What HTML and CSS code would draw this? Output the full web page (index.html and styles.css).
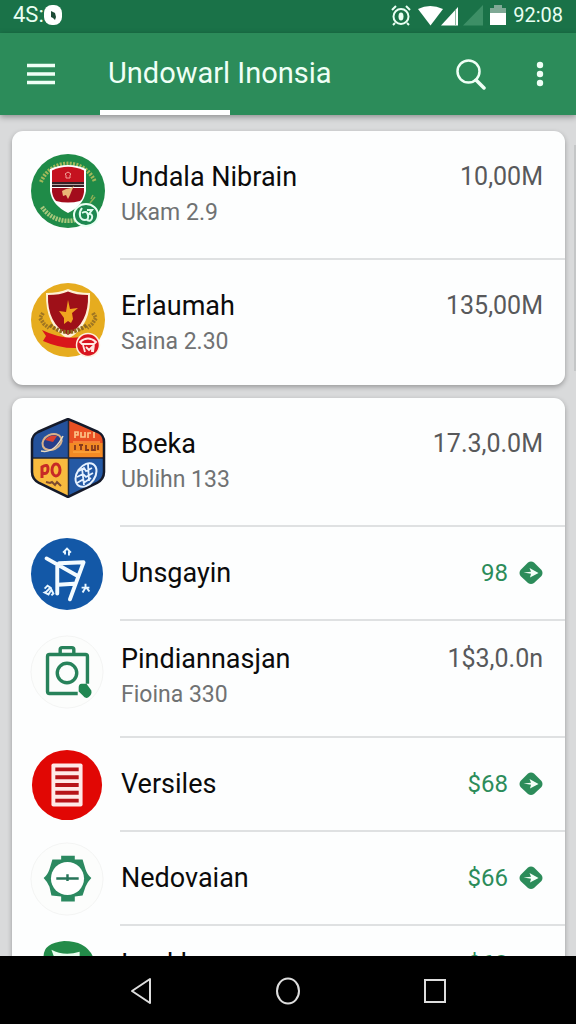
FILE: index.html
```html
<!DOCTYPE html>
<html lang="id">
<head>
<meta charset="utf-8">
<meta name="viewport" content="width=device-width, initial-scale=1">
<title>Undowarl Inonsia</title>
<link rel="stylesheet" href="styles.css">
</head>
<body>
<svg width="0" height="0" class="defs" aria-hidden="true">
  <symbol id="go" viewBox="0 0 24 24">
    <path d="M9 1.500Q12-.7 15 1.500L22.500 9Q24.500 12 22.500 15L15 22Q12 24 9 22L1.500 15Q-.5 12 1.500 9Z" fill="#2c8c5a"/>
    <path d="M4.500 11.600L12 10.800L10.500 7L19.500 12L11 16.500L12 12.800Z" fill="#f4fff8"/>
  </symbol>
</svg>
<div class="screen">
  <div class="status">
    <div class="status-left"><span>4S:</span>
      <svg width="18" height="20" viewBox="0 0 18 20"><rect width="18" height="20" rx="8" fill="#fff"/><path d="M7 6l4 2 1 4-1 3-2-2-2-1z" fill="#1c4a35"/></svg>
    </div>
    <div class="status-right">
      <svg width="94" height="22" viewBox="0 0 94 22">
        <g fill="none" stroke="#e9fff3" stroke-width="2"><circle cx="12" cy="12.500" r="7.500"/><path d="M3 6l4-4M17 2l4 4M6 19l-2 2M18 19l2 2"/></g>
        <ellipse cx="12" cy="12.500" rx="2.500" ry="4" fill="#e9fff3"/>
        <path d="M29 5Q41-1 54 5L41.500 21.500Z" fill="#fff"/>
        <path d="M52 21.500L69 3V21.500Z" fill="#fff"/><path d="M66.500 6v16" stroke="#8fb9a3"/>
        <path d="M74 21.500L94 1V21.500Z" fill="#3d8f66"/>
      </svg>
      <svg width="16" height="20" viewBox="0 0 16 20"><path d="M0 3h4V0h8v3h4v6H0z" fill="#7fa995"/><path d="M0 8h16v12H0z" fill="#fff"/></svg>
      <time>92:08</time>
    </div>
  </div>

  <header class="appbar">
    <button class="icon-button menu" aria-label="Menu"><svg width="28" height="22" viewBox="0 0 28 22"><path d="M0 2.500h28M0 11h28M0 19.500h28" stroke="#effff6" stroke-width="3.500"/></svg></button>
    <h1 class="title">Undowarl Inonsia</h1>
    <button class="icon-button" aria-label="Search"><svg width="30" height="31" viewBox="0 0 30 31"><circle cx="12.500" cy="12.500" r="11" fill="none" stroke="#effff6" stroke-width="2.500"/><path d="M20 21l8 8" stroke="#effff6" stroke-width="3.500" stroke-linecap="round"/></svg></button>
    <button class="icon-button more" aria-label="More"><svg width="8" height="26" viewBox="0 0 8 26" fill="#effff6"><circle cx="4" cy="4" r="3.200"/><circle cx="4" cy="13" r="3.200"/><circle cx="4" cy="22" r="3.200"/></svg></button>
  </header>

  <main class="content">
    <ul class="card">
      <li class="row">
        <svg class="logo" viewBox="0 0 76 76">
          <circle cx="38" cy="38" r="37" fill="#1f8b48"/>
          <path d="M11 29A29 29 0 0 1 65 29" fill="none" stroke="#a3b85a" stroke-width="4" stroke-dasharray="2 1.300"/>
          <path d="M12 54A31 31 0 0 0 45 67" fill="none" stroke="#a9c77c" stroke-width="4.500" stroke-dasharray="2 1"/>
          <path d="M60 50l5-6M61 46l2-4" stroke="#8caf56" stroke-width="1.500"/>
          <path d="M20 16Q38 8 56 16V38Q54 52 38 60Q22 52 20 38Z" fill="#fff"/>
          <path d="M22 17.500Q38 10 54 17.500V29H22Z" fill="#c5121f"/>
          <path d="M22 29H54V34H22Z" fill="#352126"/><path d="M22 31.500h32" stroke="#b7a1a0"/>
          <path d="M22 35H54V39Q53 46 50 48Q38 51 26 48Q23 45 22 39Z" fill="#a30c1c"/>
          <path d="M35 21l3-2 3 2-1 1v3h-4v-3z" fill="none" stroke="#f2a197"/>
          <path d="M32 38l4-2 5-1 3-2-2 4-2 5-2 4-2-4-3 1z" fill="#e9b676"/>
          <ellipse cx="56" cy="62" rx="12" ry="11" fill="#1c8850" stroke="#e9fff2" stroke-width="2"/>
          <path d="M52 55q-3 4-2 8t5 4 3-5-6-2M57 57h5l-3 4q4 0 3 4t-5 2" fill="none" stroke="#dffced" stroke-width="2"/>
        </svg>
        <div class="body"><div class="text"><span class="name">Undala Nibrain</span><span class="sub">Ukam 2.9</span></div><span class="amount">10,00M</span></div>
      </li>
      <li class="row">
        <svg class="logo" viewBox="0 0 76 76">
          <circle cx="38" cy="38" r="37" fill="#e6ac1f"/>
          <path d="M13 31l-3 5 4 6 5 4M63 31l3 5-4 6-5 4" fill="none" stroke="#a07622" stroke-width="4" stroke-dasharray="2 1"/>
          <path d="M16 11Q29 11 38 7Q47 11 60 11Q62 44 38 57Q15 44 16 11Z" fill="#fff1d5"/>
          <path d="M18 13Q30 13 38 9.500Q46 13 58 13Q59 41 38 53Q17 41 18 13Z" fill="#9e1018"/>
          <path d="M38 18l2 9 8-1-6 5 1 6-2 4-3-2-4 3 0-6-5-7 7 1z" fill="#f0a51f"/>
          <path d="M20 43Q37 57 57 43" fill="none" stroke="#8d6920" stroke-width="4" stroke-dasharray="2.500 1.200"/>
          <path d="M12 48Q32 58 51 55L48 66Q31 67 13 59L16 54Z" fill="#d9161b"/>
          <circle cx="58" cy="63" r="11.500" fill="#d9151f" stroke="#fff0df" stroke-width="1.500"/>
          <path d="M50 60q8-7 16 0l-2 2H52zM53 63l2 7M63 70l1-7M56 65l3 3 3-3v5" fill="none" stroke="#ffe9e3" stroke-width="1.800"/>
        </svg>
        <div class="body"><div class="text"><span class="name">Erlaumah</span><span class="sub">Saina 2.30</span></div><span class="amount">135,00M</span></div>
      </li>
    </ul>

    <ul class="card">
      <li class="row">
        <svg class="logo crest" viewBox="0 0 76 80">
          <clipPath id="crest"><path d="M38 1Q55 8 68 14Q74 17 74 24V54Q74 61 67 65L38 79L9 65Q2 61 2 54V24Q2 17 8 14Q21 8 38 1Z"/></clipPath>
          <g clip-path="url(#crest)">
            <path d="M0 0h39v40H0z" fill="#24519b"/><path d="M39 0h37v40H39z" fill="#e95023"/>
            <path d="M0 40h39v40H0z" fill="#f9bb3e"/><path d="M39 40h37v40H39z" fill="#2459a4"/>
            <path d="M39 25h37v14H39z" fill="#f38a24"/><path d="M38.500 0v80M0 40h76" stroke="#222938" stroke-width="1.500"/>
          </g>
          <path d="M38 1Q55 8 68 14Q74 17 74 24V54Q74 61 67 65L38 79L9 65Q2 61 2 54V24Q2 17 8 14Q21 8 38 1Z" fill="none" stroke="#151a2a" stroke-width="2.500"/>
          <ellipse cx="22" cy="24" rx="10" ry="7.500" fill="#263e8b" stroke="#d7b28b" stroke-width="2" transform="rotate(-25 22 24)"/>
          <path d="M15 22q5-6 12-4l-4 6z" fill="#d94132"/><path d="M11 33q13 3 22-15" fill="none" stroke="#eadcc0" stroke-width="1.500"/>
          <path d="M45 20v-6h3v3h-3m6-3v5h4v-5m3 6v-5h3m3 5v-6" fill="none" stroke="#fcc487" stroke-width="1.700"/>
          <path d="M43 24h27M43 34h27" stroke="#ffb34b"/><path d="M45 27v5M49 27h4m-2 0v5M56 27v5h3M62 27v5h3v-5M68 27v5" stroke="#86391d" stroke-width="1.800" fill="none"/>
          <path d="M12 60V49Q18 45 18 51T12 55M22 52a4 6 0 1 0 8 0a4 6 0 1 0-8 0" fill="none" stroke="#c72a26" stroke-width="3"/>
          <path d="M16 64l4 1 2-1 3 3 2-3 4 4" fill="none" stroke="#7c4a2f" stroke-width="2"/>
          <g fill="none" stroke="#e7f2ff"><ellipse cx="56" cy="57" rx="9" ry="13" stroke-width="2" transform="rotate(35 56 57)"/><path d="M49 53l5-3 2 3 6-3M47 59l6-3 3 3 7-4M47 65l5-3 3 2 6-4M52 50l2 17M58 46l1 17" stroke-width="1.800"/></g>
        </svg>
        <div class="body"><div class="text"><span class="name">Boeka</span><span class="sub">Ublihn 133</span></div><span class="amount">17.3,0.0M</span></div>
      </li>
      <li class="row single">
        <svg class="logo" viewBox="0 0 76 76">
          <circle cx="38" cy="38" r="37" fill="#1358a7"/>
          <path d="M17 22L49 40M28 28V58M30 27L55 26L41 64M29 49L45 48" fill="none" stroke="#f3fbff" stroke-width="4" stroke-linecap="round" stroke-linejoin="round"/>
          <path d="M34 16l4-4 4 4M36 18v-3M40 19v-4M15 53l3-3 3 2-4 4-2 1 4 2 3-5 2 4-2 2M53 52h8M57 48v4l-3 5M58 52l3 4" fill="none" stroke="#e8f6ff" stroke-width="2"/>
        </svg>
        <div class="body"><div class="text"><span class="name">Unsgayin</span></div><span class="amount link">98</span><svg class="go" aria-hidden="true"><use href="#go"/></svg></div>
      </li>
      <li class="row compact">
        <svg class="logo" viewBox="0 0 76 76">
          <circle cx="38" cy="38" r="37" fill="#fcfdfc" stroke="#f3f4f3"/>
          <path d="M49 60H20Q18 60 18 58V22Q18 20 20 20H57Q59 20 59 22V50M31 19V15Q31 13 33 13H43Q45 13 45 15V19" fill="none" stroke="#27825a" stroke-width="3.500"/>
          <circle cx="38" cy="39" r="10" fill="none" stroke="#27825a" stroke-width="3.500"/>
          <path d="M50 54Q50 50 53 50L58 50L63 57Q64 61 60 64Q57 66 54 62L50 58Z" fill="#218752"/>
        </svg>
        <div class="body"><div class="text"><span class="name">Pindiannasjan</span><span class="sub">Fioina 330</span></div><span class="amount">1$3,0.0n</span></div>
      </li>
      <li class="row single">
        <svg class="logo" viewBox="0 0 76 76">
          <circle cx="38" cy="38" r="36" fill="#e10704"/>
          <rect x="22" y="16" width="32" height="44" rx="2" fill="#ffe9e7"/>
          <path d="M26 22H50M26 30H50M26 38H50M26 46H50M26 54H50" stroke="#b71318" stroke-width="4"/>
        </svg>
        <div class="body"><div class="text"><span class="name">Versiles</span></div><span class="amount link">$68</span><svg class="go" aria-hidden="true"><use href="#go"/></svg></div>
      </li>
      <li class="row single">
        <svg class="logo" viewBox="0 0 76 76">
          <circle cx="38" cy="38" r="37" fill="#fcfdfc" stroke="#f3f4f3"/>
          <path d="M32 14H46V18L54 18L57 28Q59 34 63 37Q59 41 57 46L54 55L46 56V61H32V56L22 55L20 46Q18 41 14 37Q18 34 20 28L23 18L32 18Z" fill="#2b8960"/>
          <circle cx="38.500" cy="37.500" r="17" fill="#fff"/>
          <path d="M27 37.500H50M38.500 33v7" stroke="#28755a" stroke-width="2.500"/>
        </svg>
        <div class="body"><div class="text"><span class="name">Nedovaian</span></div><span class="amount link">$66</span><svg class="go" aria-hidden="true"><use href="#go"/></svg></div>
      </li>
      <li class="row compact">
        <svg class="logo" viewBox="0 0 76 76">
          <path d="M14 18Q13 3 35 1Q58 1 65 18Q60 62 38 65Q18 60 14 18Z" fill="#238b49"/>
          <path d="M22 10Q35 17 51 12L51 32H30Z" fill="#eafff0"/>
        </svg>
        <div class="body"><div class="text"><span class="name">Inmkla</span></div><span class="amount link">$68</span></div>
      </li>
    </ul>
    <div class="scroll-thumb"></div>
  </main>

  <nav class="navbar">
    <button class="icon-button" aria-label="Back"><svg width="22" height="28" viewBox="0 0 22 28"><path d="M20 2V26L2 14Z" fill="none" stroke="#ddd" stroke-width="2" stroke-linejoin="round"/></svg></button>
    <button class="icon-button" aria-label="Home"><svg width="24" height="28" viewBox="0 0 24 28"><ellipse cx="12" cy="14" rx="11" ry="12.500" fill="none" stroke="#ddd" stroke-width="2"/></svg></button>
    <button class="icon-button" aria-label="Recent apps"><svg width="22" height="26" viewBox="0 0 22 26"><rect x="1" y="2" width="20" height="22" fill="none" stroke="#ddd" stroke-width="2"/></svg></button>
  </nav>
</div>
</body>
</html>
```
FILE: styles.css
```css
* {
  box-sizing: border-box;
}

body {
  margin: 0;
  font-family: Roboto, "Liberation Sans", sans-serif;
  color: #0b0b0b;
}

.defs {
  position: absolute;
}

.screen {
  display: flex;
  flex-direction: column;
  height: 100vh;
  overflow: hidden;
  background: #d9dadb;
}

.status {
  flex: none;
  display: flex;
  justify-content: space-between;
  align-items: center;
  padding: 0 13px 4px;
  height: 33px;
  background: #1a7248;
  color: #e9fff3;
  font-size: 22px;
  line-height: 28px;
}

.status-left,
.status-right {
  display: flex;
  align-items: center;
}

.status-right {
  gap: 7px;
  font-size: 20px;
}

.appbar {
  flex: none;
  display: flex;
  align-items: center;
  height: 82px;
  padding: 0 32px 0 27px;
  background: #2c8c5a;
  box-shadow: 0 2px 6px rgba(0, 0, 0, 0.35);
  z-index: 1;
}

.icon-button {
  display: flex;
  padding: 0;
  border: 0;
  background: none;
}

.menu {
  margin-right: 45px;
}

.more {
  margin-left: 50px;
}

.title {
  flex: 1;
  display: flex;
  flex-direction: column;
  justify-content: center;
  height: 100%;
  margin: 0;
  padding: 0 8px 2px;
  color: #effff6;
  font-size: 29px;
  line-height: 36px;
  font-weight: 400;
  background: linear-gradient(#fff, #fff) left bottom / 130px 5px no-repeat;
}

.content {
  position: relative;
  flex: 1;
  min-height: 0;
  overflow: hidden;
  display: flex;
  flex-direction: column;
  gap: 13px;
  padding: 16px 11px 0 12px;
}

.card {
  flex: none;
  margin: 0;
  padding: 0;
  list-style: none;
  border-radius: 11px;
  background: #fdfefe;
  box-shadow: 0 2px 5px rgba(0, 0, 0, 0.3);
}

.row {
  display: flex;
  align-items: flex-start;
  gap: 16px;
  padding-left: 18px;
}

.logo {
  flex: none;
  width: 76px;
  height: 76px;
  margin: 22px -2px 0 0;
}

.crest {
  height: 80px;
  margin-top: 20px;
}

.body {
  flex: 1;
  display: flex;
  padding: 28px 22px 27px 1px;
  border-bottom: 2px solid #dfe1e2;
}

.row:last-child .body {
  padding-bottom: 25px;
  border-bottom: 0;
}

.text {
  flex: 1;
  display: flex;
  flex-direction: column;
}

.name {
  font-size: 27px;
  line-height: 36px;
}

.sub {
  color: #707273;
  font-size: 23px;
  line-height: 36px;
}

.amount {
  color: #58595b;
  font-size: 25px;
  line-height: 36px;
}

.single {
  align-items: center;
}

.single .logo {
  width: 74px;
  height: 74px;
  margin: 0;
}

.single .body {
  align-items: center;
  padding-bottom: 28px;
}

.compact .logo {
  width: 74px;
  height: 74px;
  margin: 14px 0 0;
}

.compact .body {
  padding-top: 20px;
  padding-bottom: 23px;
}

.link {
  color: #2c8c5a;
  font-size: 24px;
}

.go {
  width: 24px;
  height: 24px;
  margin-left: 11px;
}

.compact .link {
  margin-right: 35px;
}

.scroll-thumb {
  position: absolute;
  top: 30px;
  right: 0;
  width: 2px;
  height: 226px;
  background: #c4c6c7;
}

.navbar {
  flex: none;
  display: flex;
  justify-content: center;
  align-items: center;
  gap: 124px;
  height: 68px;
  padding-top: 2px;
  background: #000;
}
```
